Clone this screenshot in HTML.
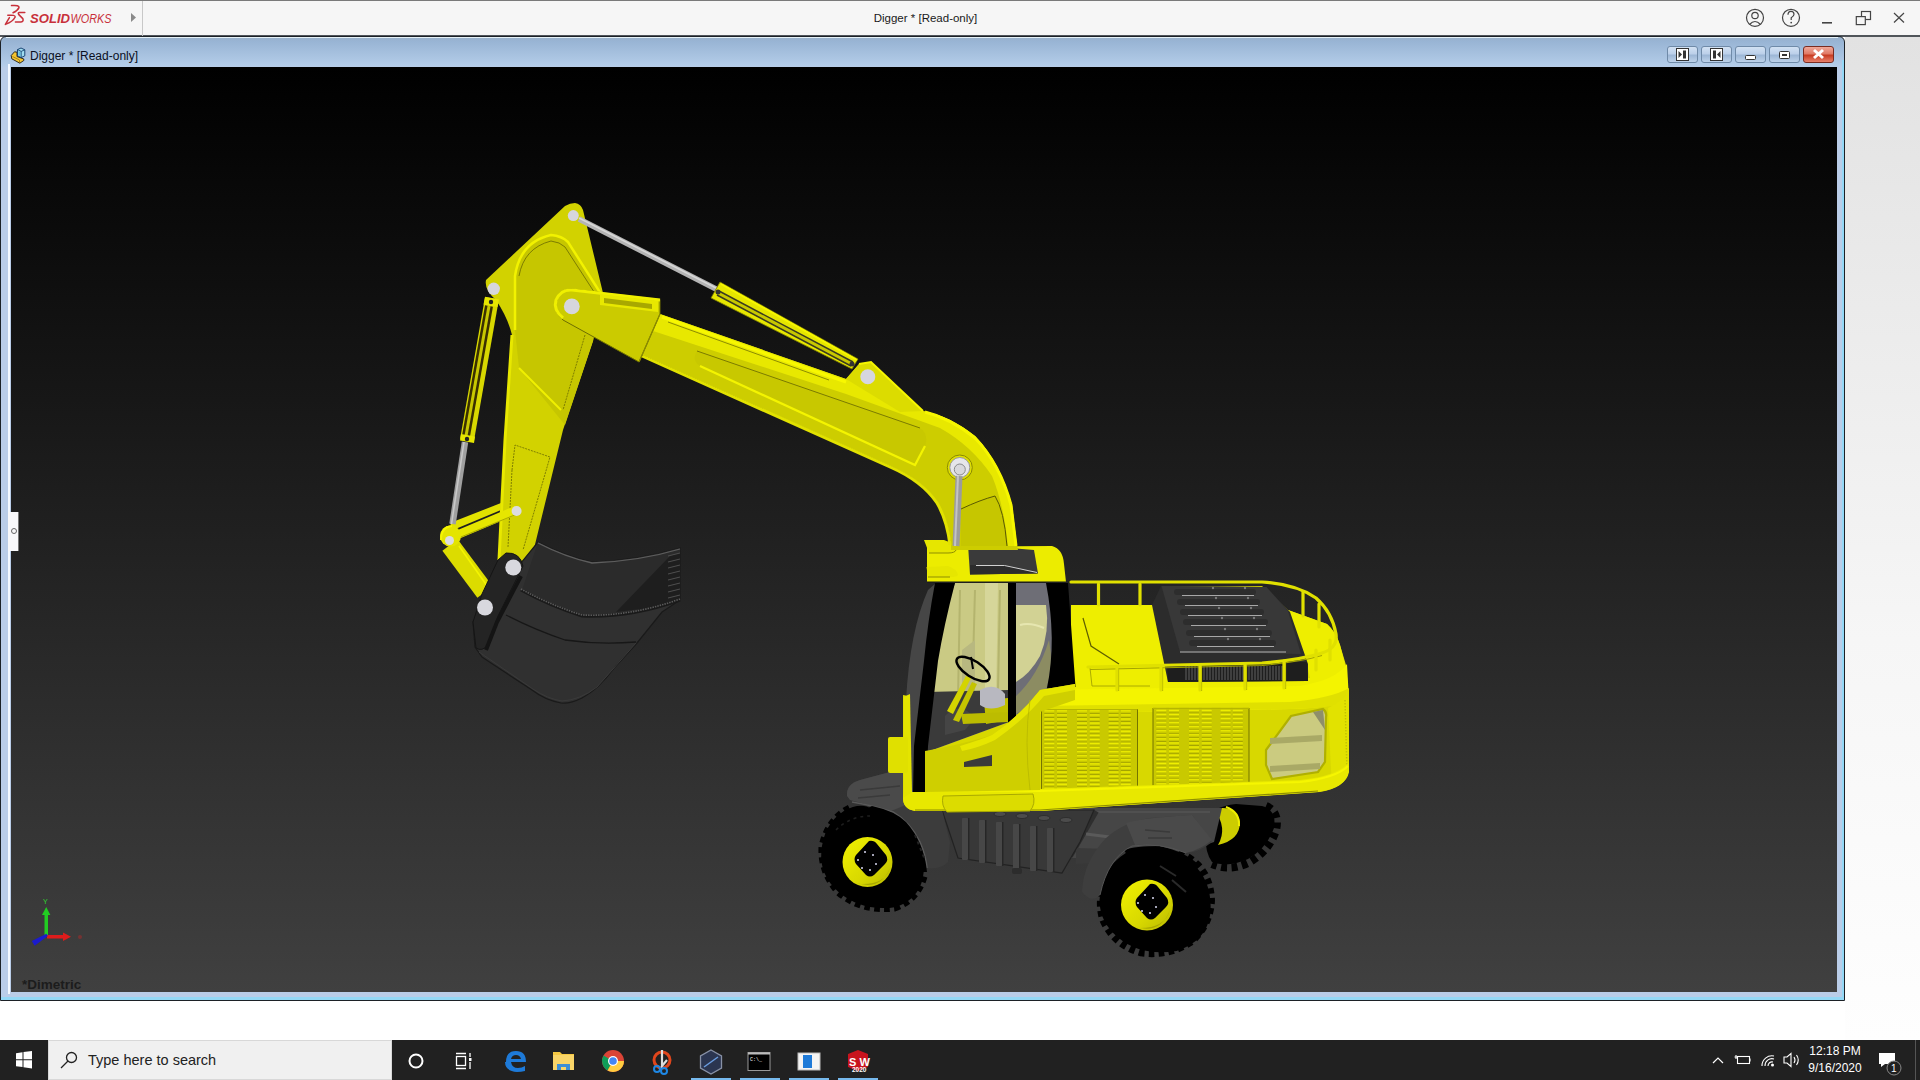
<!DOCTYPE html>
<html><head><meta charset="utf-8">
<style>
*{margin:0;padding:0;box-sizing:border-box}
html,body{width:1920px;height:1080px;overflow:hidden;background:#fff;font-family:"Liberation Sans",sans-serif}
.abs{position:absolute}
#topbar{left:0;top:0;width:1920px;height:37px;background:#f6f6f6;border-top:1px solid #7a7a7a}
#topline{left:0;top:35px;width:1920px;height:2px;background:#50555a}
#sep{left:142px;top:1px;width:1px;height:35px;background:#c8c8c8}
#title{left:0;top:12px;width:1851px;text-align:center;font-size:11.5px;color:#1a1a1a}
#rightstrip{left:1845px;top:37px;width:75px;height:1003px;background:linear-gradient(#e2e2e2,#f6f6f6 60%,#fefefe)}
#frame{left:0;top:36px;width:1845px;height:965px;border:1px solid #1c2126;border-radius:6px 6px 0 0;background:linear-gradient(#9ab2cc 1px,#98b4d4 4px,#b3cce8 28px,#bacde8 31px,#bacde8)}
#fr-in{left:1px;top:1px;width:1843px;height:963px;border:1px solid #e9f3fb;border-top:none;border-radius:5px 5px 0 0}
#fr-cy{left:1px;top:997px;width:1843px;height:3px;background:#94d8f6}
#fr-cyr{left:1842px;top:60px;width:2px;height:940px;background:#94d8f6}
#vpborder{left:8px;top:64px;width:1831px;height:930px;border-left:2px solid #f4f9ff;}
#vp{left:11px;top:67px;width:1826px;height:925px;background:linear-gradient(#000,#404040)}
#ftitle{left:30px;top:49px;font-size:12px;color:#0a0f1e}
.btn{top:46px;width:31px;height:17px;border:1px solid #6f8aa8;border-radius:3px;background:linear-gradient(#d2e1f3,#bcd0ea 45%,#9db7d6 55%,#bdd2ea)}
.btn.x{background:linear-gradient(#f0a89a,#e07a66 45%,#c83c22 55%,#e8816c);border-color:#7a2c22}
#taskbar{left:0;top:1040px;width:1920px;height:40px;background:#212121}
#search{left:48px;top:1040px;width:344px;height:40px;background:#f0f0f0;border:1px solid #d8d8d8}
#stext{left:88px;top:1052px;font-size:14.5px;color:#222}
#tray{font-size:12px;color:#fff;text-align:center}
</style></head><body>
<div id="topbar" class="abs"></div>
<div id="topline" class="abs"></div>
<div id="sep" class="abs"></div>
<div id="title" class="abs">Digger * [Read-only]</div>
<!-- SW logo -->
<svg class="abs" style="left:0;top:0" width="142" height="36" viewBox="0 0 142 36">
 <g fill="none" stroke="#c8303a" stroke-width="1.5" stroke-linecap="round" stroke-linejoin="round">
  <path d="M11.5 5.6 Q19.5 4.8 19 7.6 Q17.5 10.8 13 12.8"/>
  <path d="M7.8 15.3 Q15.5 14.6 15.2 17 Q13 21.5 5.4 24.4 L9.4 17.6"/>
  <path d="M24.8 12.4 L19.2 12.4 Q17.6 12.8 18.8 14.6 L22.8 18.6 Q24 21.6 21 22 L15.4 22"/>
 </g>
 <text x="30" y="22.5" textLength="40" lengthAdjust="spacingAndGlyphs" font-family="Liberation Sans" font-weight="bold" font-style="italic" font-size="12" fill="#c8303a">SOLID</text>
 <text x="70.5" y="22.5" textLength="41" lengthAdjust="spacingAndGlyphs" font-family="Liberation Sans" font-style="italic" font-size="12" fill="#c8303a">WORKS</text>
 <path d="M131 13 L136 17.5 L131 22 Z" fill="#8a8a8a"/>
</svg>
<!-- top right icons -->
<svg class="abs" style="left:1740px;top:0" width="180" height="36" viewBox="0 0 180 36">
 <g fill="none" stroke="#444" stroke-width="1.2">
  <circle cx="15" cy="17.8" r="8.5"/>
  <circle cx="15" cy="15.5" r="3.2"/>
  <path d="M9.5 24.5 Q15 18.5 20.5 24.5"/>
  <circle cx="51" cy="17.8" r="8.5"/>
  <path d="M48 14.8 Q48 11.3 51 11.3 Q54 11.3 54 14.3 Q54 16.3 51.2 17.8 L51.2 20"/>
 </g>
 <circle cx="51.2" cy="22.6" r="0.9" fill="#444"/>
 <rect x="82" y="22" width="10" height="1.6" fill="#444"/>
 <g fill="none" stroke="#444" stroke-width="1.2">
  <rect x="121.5" y="11.5" width="9" height="8"/>
  <rect x="116.3" y="16.6" width="9" height="8" fill="#f6f6f6"/>
  <path d="M154 13 L164 22.5 M164 13 L154 22.5"/>
 </g>
</svg>
<div id="rightstrip" class="abs"></div>
<div id="frame" class="abs"></div>
<div id="fr-cy" class="abs"></div>
<div class="abs" style="left:6px;top:37px;width:1832px;height:1px;background:#e6f2f8"></div>
<div id="fr-cyr" class="abs"></div>
<div id="vpborder" class="abs"></div>
<div id="vp" class="abs"></div>
<!-- frame title -->
<svg class="abs" style="left:10px;top:46px" width="18" height="18" viewBox="0 0 18 18">
 <path d="M1.2 9.5 L4.5 5.8 L7 6.2 L7 10.5 L13.8 13 L13.8 14.5 L9.8 17.2 L1.8 12.8 Z" fill="#f4c430" stroke="#1a1a1a" stroke-width="0.9" stroke-linejoin="round"/>
 <path d="M2.5 10.5 L9.5 14 L9.5 17" fill="none" stroke="#8a6a10" stroke-width="0.7"/>
 <path d="M7.5 3.6 L11 2 L14.8 3.8 L14.8 9.8 L11.2 11.6 L7.5 9.8 Z" fill="#9fdcf0" stroke="#0d3768" stroke-width="0.9" stroke-linejoin="round"/>
 <path d="M7.5 3.6 L11.2 5.4 L14.8 3.8 M11.2 5.4 L11.2 11.6" fill="none" stroke="#0d3768" stroke-width="0.8"/>
 <path d="M8.4 5 L10.6 6 L10.6 10 L8.4 9 Z" fill="#3aa6c8" opacity="0.6"/>
</svg>
<div id="ftitle" class="abs">Digger * [Read-only]</div>
<div class="abs btn" style="left:1667px"></div>
<div class="abs btn" style="left:1701px"></div>
<div class="abs btn" style="left:1735px"></div>
<div class="abs btn" style="left:1769px"></div>
<div class="abs btn x" style="left:1803px"></div>
<svg class="abs" style="left:1660px;top:40px" width="180" height="28" viewBox="0 0 180 28">
 <g fill="#fff" stroke="#333" stroke-width="1">
  <rect x="16.5" y="8.5" width="12" height="12"/>
  <rect x="50.5" y="8.5" width="12" height="12"/>
  <rect x="85.5" y="15.5" width="10" height="4" rx="1"/>
  <rect x="119.5" y="11.5" width="10" height="7" rx="1"/>
 </g>
 <g fill="#333">
  <rect x="23" y="10.5" width="3" height="8"/><path d="M18.5 11 L22 14.5 L18.5 18 Z"/>
  <rect x="53" y="10.5" width="3" height="8"/><path d="M60.5 11 L57 14.5 L60.5 18 Z"/>
  <rect x="122" y="14" width="5" height="2"/>
 </g>
 <path d="M154 10 L163 18 M163 10 L154 18" stroke="#fff" stroke-width="3"/>
</svg>
<!-- side tab -->
<div class="abs" style="left:8px;top:512px;width:11px;height:39px;background:#f8f8fa;border-right:1px solid #777"></div>
<div class="abs" style="left:11px;top:528px;width:6px;height:6px;border:1px solid #666;border-radius:50%"></div>

<!-- EXCAVATOR -->
<svg id="exc" class="abs" style="left:0;top:0" width="1920" height="1080" viewBox="0 0 1920 1080">
<defs>
 <pattern id="louv" x="0" y="0" width="14" height="4.6" patternUnits="userSpaceOnUse">
  <rect width="14" height="4.6" fill="#cfcf00"/>
  <rect x="1" y="0.6" width="10" height="1.6" fill="#f4f400"/>
  <rect x="1" y="2.2" width="10" height="0.9" fill="#8a8a00"/>
 </pattern>
 <pattern id="tread" x="0" y="0" width="6" height="6" patternUnits="userSpaceOnUse">
  <rect width="6" height="6" fill="#000"/>
 </pattern>
 <linearGradient id="gRim" x1="0" y1="0" x2="1" y2="1">
  <stop offset="0" stop-color="#f2f200"/><stop offset="0.6" stop-color="#d8d800"/><stop offset="1" stop-color="#b8b800"/>
 </linearGradient>
 <linearGradient id="gGlassL" x1="0" y1="0" x2="0" y2="1">
  <stop offset="0" stop-color="#c9c98a"/><stop offset="1" stop-color="#d8d898"/>
 </linearGradient>
</defs>

<!-- ===== far rear wheel ===== -->
<path d="M1206 822 Q1212 806 1236 804 L1262 806 Q1277 810 1274 828 Q1267 848 1248 859 Q1228 868 1212 862 Q1203 850 1206 822 Z" fill="#000"/>
<path d="M1266 806 Q1280 812 1276 830 Q1270 850 1250 862 Q1230 872 1212 864" fill="none" stroke="#000" stroke-width="8" stroke-dasharray="6 4.5"/>
<path d="M1214 809 Q1236 804 1240 822 Q1240 840 1218 845 Q1228 828 1214 809 Z" fill="#cccc00"/>
<path d="M1226 807 Q1240 812 1239 826" stroke="#eeee00" stroke-width="2" fill="none"/>

<!-- ===== undercarriage ===== -->
<path d="M1070 808 L1222 808 L1214 842 L1190 850 L1100 858 L1070 858 Z" fill="#464646"/>
<path d="M1080 812 L1210 812" stroke="#555" stroke-width="1.5"/>
<path d="M1096 811 L1070 856" stroke="#2e2e2e" stroke-width="6"/>
<path d="M1086 834 L1118 838" stroke="#5a5a5a" stroke-width="3"/>
<path d="M1076 848 L1140 850 L1136 862 L1076 864 Z" fill="#3a3a3a"/>
<!-- front box -->
<path d="M942 810 L1094 810 L1080 842 L1062 873 L958 858 Z" fill="#383838" stroke="#222" stroke-width="1.2"/>
<g fill="#474747">
 <rect x="962" y="818" width="6" height="42" rx="1"/><rect x="979" y="820" width="6" height="43" rx="1"/><rect x="996" y="822" width="6" height="44" rx="1"/>
 <rect x="1013" y="824" width="6" height="45" rx="1"/><rect x="1030" y="826" width="6" height="45" rx="1"/><rect x="1047" y="828" width="6" height="44" rx="1"/>
</g>
<g fill="#262626">
 <rect x="968" y="818" width="1.5" height="42"/><rect x="985" y="820" width="1.5" height="43"/><rect x="1002" y="822" width="1.5" height="44"/>
 <rect x="1019" y="824" width="1.5" height="45"/><rect x="1036" y="826" width="1.5" height="45"/><rect x="1053" y="828" width="1.5" height="44"/>
</g>
<g fill="#4c4c4c" stroke="#2a2a2a" stroke-width="0.8"><ellipse cx="1000" cy="814" rx="6" ry="2.5"/><ellipse cx="1022" cy="816" rx="6" ry="2.5"/><ellipse cx="1044" cy="818" rx="6" ry="2.5"/><ellipse cx="1066" cy="820" rx="6" ry="2.5"/></g>
<rect x="1012" y="868" width="10" height="6" rx="2" fill="#2c2c2c"/>

<!-- ===== front fender ===== -->
<path d="M847 796 Q846 784 860 780 L890 772 L912 772 L942 810 L950 842 L948 862 Q940 870 927 868 Q924 842 906 822 Q895 811 870 806 Z" fill="#3c3c3c"/>
<path d="M847 796 Q846 784 860 780 L890 772 L912 772 L918 800 L891 811 Q872 806 850 800 Z" fill="#4a4a4a"/>
<path d="M852 802 Q875 806 893 812 Q910 822 920 842 Q926 856 927 868" stroke="#5a5a5a" stroke-width="1.5" fill="none"/>
<path d="M860 790 L900 786 M858 798 L890 795" stroke="#3a3a3a" stroke-width="1.5"/>
<!-- front tire -->
<path d="M818 852 Q820 822 842 808 Q860 798 872 806 Q895 811 906 822 Q924 842 927 872 Q925 900 898 910 Q862 916 836 894 Q816 876 818 852 Z" transform="translate(873 858) scale(0.94) translate(-873 -858)" fill="#000"/>
<path d="M872 806 Q895 811 906 822 Q924 842 927 872 L915 872 Q910 845 895 828 Q880 815 860 812 Z" fill="#000"/>
<path d="M848 805 Q826 816 819 845 Q817 872 836 894 Q860 915 896 911 Q922 902 928 874" transform="translate(873 858) scale(0.93) translate(-873 -858)" fill="none" stroke="#000" stroke-width="9" stroke-dasharray="6 4.5"/>
<path d="M836 830 Q850 816 870 816" stroke="#1e1e1e" stroke-width="1.5" fill="none" stroke-dasharray="3 4"/>
<path d="M915 835 L925 860" stroke="#222" stroke-width="2" stroke-dasharray="3 4"/>
<ellipse cx="867.5" cy="862" rx="25" ry="25" fill="url(#gRim)"/>
<path d="M854 882 Q880 892 890 868 Q885 885 860 884 Z" fill="#a8a800"/>
<path d="M869 841 Q874 840 877 844 L886 855 Q889 860 885 864 L874 875 Q870 878 866 875 L856 864 Q853 859 856 855 Z" fill="#000"/>
<g fill="#d8d8f0"><circle cx="865" cy="852" r="1"/><circle cx="873" cy="855" r="1"/><circle cx="876" cy="864" r="1"/><circle cx="870" cy="870" r="1"/><circle cx="862" cy="868" r="1"/><circle cx="858" cy="860" r="1"/></g>

<!-- rear tire -->
<path d="M1096 900 Q1098 866 1124 850 Q1135 846 1160 846 Q1186 852 1200 866 Q1216 884 1214 914 Q1210 944 1178 954 Q1140 960 1116 940 Q1096 924 1096 900 Z" transform="translate(1155 902) scale(0.94) translate(-1155 -902)" fill="#000"/>
<path d="M1124 850 Q1135 846 1160 846 Q1186 852 1200 866 L1190 872 Q1160 856 1130 860 Z" fill="#000"/>
<path d="M1100 880 Q1094 905 1100 922 Q1112 948 1140 956 Q1170 960 1194 944 Q1214 926 1215 900 Q1214 876 1200 862 Q1190 852 1176 848" transform="translate(1155 902) scale(0.93) translate(-1155 -902)" fill="none" stroke="#000" stroke-width="9" stroke-dasharray="6 4.5"/>
<path d="M1160 866 L1176 876 M1172 880 L1186 892" stroke="#2a2a2a" stroke-width="2"/>
<ellipse cx="1147" cy="905" rx="26" ry="25.5" fill="url(#gRim)"/>
<path d="M1133 926 Q1160 936 1170 910 Q1165 928 1140 928 Z" fill="#a8a800"/>
<path d="M1150 884 Q1155 883 1158 887 L1167 898 Q1170 903 1166 907 L1155 918 Q1151 921 1147 918 L1137 907 Q1134 902 1137 898 Z" fill="#000"/>
<g fill="#dcdcf4"><circle cx="1145" cy="895" r="1"/><circle cx="1153" cy="898" r="1"/><circle cx="1156" cy="907" r="1"/><circle cx="1150" cy="913" r="1"/><circle cx="1142" cy="911" r="1"/><circle cx="1138" cy="903" r="1"/></g>
<!-- ===== rear fender ===== -->
<path d="M1082 892 Q1083 862 1106 838 Q1124 822 1150 818 L1192 815 L1212 842 Q1200 852 1186 853 Q1160 842 1132 846 Q1108 858 1100 895 Q1092 904 1082 892 Z" fill="#3e3e3e"/>
<path d="M1126 823 Q1140 818 1192 815 L1212 840 Q1200 850 1186 853 Q1160 843 1135 845 Z" fill="#4a4a4a"/>
<path d="M1145 830 L1170 832 M1148 838 L1172 838" stroke="#3a3a3a" stroke-width="1.5"/>
<path d="M1100 895 Q1108 858 1132 846 Q1160 842 1186 853" stroke="#555" stroke-width="1" fill="none"/>
<!-- ===== body ===== -->
<defs>
 <pattern id="louv2" x="1041" y="713" width="240" height="4.08" patternUnits="userSpaceOnUse">
  <rect width="240" height="4.08" fill="#c9c900"/>
  <g fill="#8e8e00"><rect x="3.3" y="0.3" width="10" height="0.8"/><rect x="16" y="0.3" width="10" height="0.8"/><rect x="36" y="0.3" width="10" height="0.8"/><rect x="48.7" y="0.3" width="10" height="0.8"/><rect x="67.6" y="0.3" width="10" height="0.8"/><rect x="79.8" y="0.3" width="10" height="0.8"/>
  <rect x="115.3" y="0.3" width="10" height="0.8"/><rect x="128" y="0.3" width="10" height="0.8"/><rect x="148" y="0.3" width="10" height="0.8"/><rect x="160.7" y="0.3" width="10" height="0.8"/><rect x="179.6" y="0.3" width="10" height="0.8"/><rect x="191.8" y="0.3" width="10" height="0.8"/></g>
  <g fill="#f0f000"><rect x="3.3" y="1.1" width="10" height="1.5"/><rect x="16" y="1.1" width="10" height="1.5"/><rect x="36" y="1.1" width="10" height="1.5"/><rect x="48.7" y="1.1" width="10" height="1.5"/><rect x="67.6" y="1.1" width="10" height="1.5"/><rect x="79.8" y="1.1" width="10" height="1.5"/>
  <rect x="115.3" y="1.1" width="10" height="1.5"/><rect x="128" y="1.1" width="10" height="1.5"/><rect x="148" y="1.1" width="10" height="1.5"/><rect x="160.7" y="1.1" width="10" height="1.5"/><rect x="179.6" y="1.1" width="10" height="1.5"/><rect x="191.8" y="1.1" width="10" height="1.5"/></g>
 </pattern>
</defs>
<!-- silhouette / side color -->
<path d="M1071 605 L1153 605 L1163 586 L1262 586 L1288 610 L1327 624 Q1336 632 1340 645 L1346 665 L1349 700 L1349 770 Q1346 788 1320 792 L1040 811 L915 811 Q903 809 903 798 L903 695 L930 700 L1040 690 L1071 690 Z" fill="#d8d800"/>
<!-- deck top surface -->
<path d="M1071 605 L1153 605 L1168 682 L1310 678 L1306 660 L1288 610 L1327 624 Q1336 632 1340 645 L1346 668 Q1335 684 1300 688 L1071 692 Z" fill="#eeee00"/>
<!-- rounded top edge band -->
<path d="M1040 690 L1300 686 Q1336 680 1347 664 L1349 700 Q1332 708 1290 709 L1040 714 Z" fill="#f4f400"/>
<path d="M1040 706 L1290 702 Q1332 698 1349 688 L1349 702 Q1332 708 1290 709 L1040 714 Z" fill="#e0e000"/>
<!-- right end highlight -->
<path d="M1328 708 Q1345 700 1349 690 L1349 770 Q1346 784 1332 788 Z" fill="#e2e200"/>
<path d="M1345 700 L1347 770" stroke="#c4c400" stroke-width="1.5" stroke-dasharray="1.5 1.5"/>
<!-- louver panels -->
<rect x="1041" y="709" width="96.5" height="79.5" fill="url(#louv2)"/>
<rect x="1153" y="708" width="96" height="79.5" fill="url(#louv2)" transform="translate(0 -0.5)"/>
<path d="M1041.5 709 V789 M1137.5 709 V789 M1153 708 V788 M1249 708 V788" stroke="#6a6a00" stroke-width="0.9"/>
<path d="M1041 709.5 H1137.5 M1153 708.5 H1249" stroke="#b6b600" stroke-width="1"/>
<!-- right window -->
<path d="M1266 750 L1291 716 L1323 709 Q1327 712 1326 717 L1325 762 L1318 772 L1272 779 L1266 765 Z" fill="#cbcb80" stroke="#b0b000" stroke-width="2.2"/>
<path d="M1270 738 L1322 735 L1322 741 L1270 744 Z" fill="#a9a966"/>
<path d="M1270 766 L1320 763 L1320 769 L1270 772 Z" fill="#a9a966"/>
<path d="M1313 712 L1323 710 L1325 730 Z" fill="#8e8e6a"/>
<!-- bottom rail -->
<path d="M905 788 L1040 789 L1300 780 Q1338 776 1349 762 L1349 772 Q1346 788 1318 792 L1040 811 L915 811 Q903 809 903 798 Z" fill="#e8e800"/>
<path d="M910 790 L1040 791 L1300 782 Q1336 778 1348 766" stroke="#f6f600" stroke-width="2" fill="none"/>
<path d="M915 810 L1040 810 L1318 791" stroke="#8e8e00" stroke-width="1.2" fill="none"/>
<!-- step -->
<path d="M943 796 L1033 794 Q1036 804 1030 811 L947 812 Q941 806 943 796 Z" fill="#dcdc00" stroke="#a8a800" stroke-width="1"/>

<!-- ===== deck / engine / rails ===== -->
<path d="M1083 618 L1091 646 L1119 664" stroke="#5e5e00" stroke-width="1.2" fill="none"/>
<path d="M1090 668 L1092 686 L1150 686" stroke="#9a9a00" stroke-width="0.8" fill="none"/>
<!-- engine cover -->
<path d="M1152 605 L1161 586 L1266 587 L1290 612 L1308 664 L1308 681 L1168 682 Z" fill="#2c2c2c"/>
<path d="M1161.5 586 L1266.5 587 L1288 611 L1301 654 L1180 652 Z" fill="#383838"/>
<path d="M1180 652 L1286 652" stroke="#8a8a8a" stroke-width="1.4"/>
<path d="M1167 664 L1307 662 L1308 681 L1168 682 Z" fill="#1e1e1e"/>
<g stroke="#6a6a6a" stroke-width="0.9"><path d="M1186 666 V680 M1189 666 V680 M1192 666 V680 M1195 666 V680 M1198 666 V680 M1201 666 V680 M1204 666 V680 M1207 666 V680 M1210 666 V680 M1213 666 V680 M1216 666 V680 M1219 666 V680 M1222 666 V680 M1225 666 V680 M1228 666 V680 M1231 666 V680 M1234 666 V680 M1237 666 V680 M1240 666 V680 M1243 666 V680 M1246 666 V680 M1249 666 V680 M1252 666 V680 M1255 666 V680 M1258 666 V680 M1261 666 V680 M1264 666 V680 M1267 666 V680 M1270 666 V680 M1273 666 V680 M1276 666 V680 M1279 666 V680 M1282 666 V680"/></g>
<g fill="#2d2d2d">
 <rect x="1174" y="589" width="82" height="6" rx="3"/><rect x="1177" y="599" width="83" height="6" rx="3"/><rect x="1180" y="609" width="84" height="6" rx="3"/>
 <rect x="1183" y="619" width="85" height="6" rx="3"/><rect x="1186" y="630" width="86" height="6" rx="3"/><rect x="1189" y="640" width="87" height="6" rx="3"/>
</g>
<g stroke="#a8a8a8" stroke-width="1.2">
 <path d="M1182 595.5 L1254 595.5 M1185 605.5 L1258 605.5 M1188 615.5 L1262 615.5 M1191 625.5 L1266 625.5 M1194 636.5 L1270 636.5 M1197 646.5 L1274 646.5"/>
</g>
<g fill="#7a7a7a"><circle cx="1213" cy="588" r="1.2"/><circle cx="1245" cy="588" r="1.2"/><circle cx="1216" cy="598" r="1.2"/><circle cx="1248" cy="598" r="1.2"/><circle cx="1219" cy="608" r="1.2"/><circle cx="1251" cy="608" r="1.2"/><circle cx="1222" cy="618" r="1.2"/><circle cx="1254" cy="618" r="1.2"/><circle cx="1225" cy="629" r="1.2"/><circle cx="1257" cy="629" r="1.2"/><circle cx="1228" cy="639" r="1.2"/><circle cx="1260" cy="639" r="1.2"/></g>
<!-- rails -->
<g stroke="#a4a400" stroke-width="1.2" fill="none">
 <path d="M1090 669.5 L1262 665.5 Q1300 662 1322 655.5"/>
 <path d="M1118.5 668 V691 M1162.5 667 V691 M1201.5 666 V691 M1246.5 665 V690 M1285.5 662 V689"/>
</g>
<g stroke="#e0e000" stroke-width="3.2" fill="none" stroke-linecap="round">
 <path d="M1071 582 L1262 582 Q1296 584 1316 598 Q1332 612 1336 634 Q1338 648 1322 653 Q1300 660 1262 663 L1088 667"/>
 <path d="M1098.5 584 V605 M1140 584 V605 M1303 592 L1303 616 M1319 604 V627"/>
 <path d="M1117 667 V690 M1161 666 V690 M1200 665 V690 M1245 664 V689 M1284 661 V688 M1316 650 V670 M1330 640 V660"/>
</g>
<!-- ===== cab ===== -->
<!-- cab front grey face (windshield edge) -->
<path d="M906 700 Q910 630 928 590 L936 583 L955 583 L927 792 L906 792 Z" fill="#464646"/>
<!-- glass left pane -->
<path d="M955 583 L1009 583 L1009 722 L968 737 L927 752 L930 690 Q940 620 955 583 Z" fill="#caca84"/>
<path d="M960 590 L958 700 M975 590 L972 700 M1000 590 L998 690" stroke="#b4b46e" stroke-width="2" fill="none"/>
<path d="M985 583 L998 583 L996 700 L985 700 Z" fill="#d6d69a"/>
<path d="M962 650 L975 640 L975 700 L962 700 Z" fill="#b8b880"/>
<!-- glass right pane -->
<path d="M1016 583 L1047 583 Q1057 640 1048 687 L1040 700 L1016 715 Z" fill="#6e6e76"/>
<path d="M1016 605 L1046 605 Q1050 632 1040 656 Q1030 674 1016 682 Z" fill="#d2d294"/>
<path d="M1020 625 Q1030 622 1044 628" stroke="#e6e6b0" stroke-width="2" fill="none"/>
<path d="M1049 640 Q1054 665 1046 690 L1032 704 L1016 714 L1016 696 Q1038 676 1049 640 Z" fill="#8c8c62"/>
<!-- interior bits -->
<path d="M927 692 L1009 690 L1009 722 L968 737 L927 752 Z" fill="#3a3a3a"/>
<path d="M945 716 Q960 700 975 718 L965 730 L945 735 Z" fill="#454545"/>
<path d="M984 700 L1008 698 L1008 720 L986 724 Z" fill="#c0c000"/>
<path d="M961 714 L1008 712 L1008 722 L963 724 Z" fill="#bcbc00"/>
<path d="M947 711 L966 676 L971 678 L953 714 Z" fill="#d4d400"/>
<path d="M953 720 L972 682 L977 684 L959 722 Z" fill="#c4c400"/>
<path d="M980 690 Q995 682 1005 694 L1005 705 Q990 712 980 705 Z" fill="#b8b8c0"/>
<ellipse cx="973" cy="669" rx="19" ry="8" transform="rotate(33 973 669)" fill="none" stroke="#000" stroke-width="2.5"/>
<path d="M973 669 L971 657" stroke="#000" stroke-width="2"/>
<!-- pillars -->
<path d="M935 583 L955 583 Q944 625 938 661 L928 746 L926 792 L913 792 L914 746 L924 661 Q928 620 935 583 Z" fill="#000"/>
<rect x="1008" y="583" width="8" height="140" fill="#000"/>
<path d="M1046 583 L1068 583 L1075.5 687 L1047 688 Q1057 640 1046 583 Z" fill="#000"/>
<!-- left yellow frame & mirror -->
<path d="M903.5 697 L910 694 L912 792 L903.5 798 Z" fill="#e4e400"/>
<rect x="888" y="737" width="20" height="36" rx="2" fill="#e0e000"/>
<!-- lower door -->
<path d="M925 751 Q960 745 992 735 Q1020 716 1040 690 L1075 684 L1075 700 L1040 712 L1040 790 L925 792 Z" fill="#cfcf00"/>
<path d="M960 746 Q980 740 992 735 Q1020 716 1040 690 L1075 684 L1075 690 L1044 696 Q1024 720 995 740 Q978 748 962 751 Z" fill="#e6e600"/>
<path d="M1030 700 Q1024 740 1030 790" stroke="#b8b800" stroke-width="0.8" fill="none"/>
<path d="M964 762 L992 755 L992 766 L964 767 Z" fill="#3a3a3a"/>
<!-- roof -->
<path d="M927 547 L1052 546 Q1063 549 1064 564 L1066 582 L927 582 Z" fill="#ecec00"/>
<path d="M968 544.5 L1034 550 L1038 573.5 L970 574.5 Z" fill="#3a3a3a"/>
<path d="M970 565 L1004 565 L1038 573.5 L970 574.5 Z" fill="#2c2c2c"/>
<path d="M976 565.5 L1004.5 565.5 L1037 572.5" stroke="#d0d0d0" stroke-width="1" fill="none"/>
<!-- roof brackets -->
<path d="M924 540 L944 540 Q954 543 956 550 Q955 553 948 553 L929 553 Z" fill="#e6e600"/>
<path d="M926.5 567 L948 566 Q957 569 958 575 Q957 577 950 577 L928 577 Z" fill="#e6e600"/>
<path d="M929 553 L948 553 Q955 553 956 550" stroke="#8e8e00" stroke-width="1" fill="none"/>
<path d="M928 577 L950 577" stroke="#8e8e00" stroke-width="1"/>
<path d="M927 582 L1066 582" stroke="#1a1a1a" stroke-width="1.2"/>
<!-- ===== boom ===== -->
<path d="M660 314 L846 379 L859 364 L871 362 L923 411 Q950 416 975 436 Q1000 462 1012 505 L1017 546 L1018 550 L951 550 L951 545 Q948 520 937 502 Q922 480 890 466 L640 354 Z" fill="#cdcd00"/>
<!-- top bright band -->
<path d="M660 314 L846 379 L900 400 L923 411 Q950 416 975 436 Q1000 462 1012 505 L1017 546 L1008 546 Q1004 505 992 476 Q972 446 940 428 L846 394 L650 330 Z" fill="#e8e800"/>
<path d="M662 317 L846 382" stroke="#f8f800" stroke-width="3"/>
<path d="M925 412 Q950 418 975 438 Q1000 464 1011 505 L1016 546" stroke="#f6f600" stroke-width="3" fill="none"/>
<path d="M668 322 L829 380" stroke="#8c8c00" stroke-width="1"/>
<!-- recessed panel -->
<path d="M697 351 L920 428 Q929 434 925 446 L915 465 L700 366 Q691 360 697 351 Z" fill="#c8c800"/>
<path d="M700 366 L915 465 L925 446" stroke="#f4f400" stroke-width="2.2" fill="none"/>
<path d="M697 351 L920 428" stroke="#7a7a00" stroke-width="1" fill="none"/>
<!-- lower bright edge -->
<path d="M642 356 L890 467 Q922 481 937 503 Q947 520 950 545" stroke="#e2e200" stroke-width="3" fill="none"/>
<!-- curved lower inner panel -->
<path d="M961 509 Q980 500 995 496 Q1004 510 1007 546 L961 546 Z" fill="#c6c600"/>
<path d="M961 509 Q980 500 995 496 Q1004 510 1007 546" stroke="#5a5a00" stroke-width="1" fill="none"/>
<!-- bracket on boom -->
<path d="M846 379 L859 364 L871 362 L923 411 L900 412 Z" fill="#dcdc00"/>
<path d="M859 364 L871 362 L923 411" stroke="#f6f600" stroke-width="2" fill="none"/>
<circle cx="867.8" cy="376.7" r="7.5" fill="#d6d6de"/>
<!-- boom pin + rod -->
<circle cx="959.8" cy="467.5" r="12.5" fill="#e0e000" stroke="#8a8a00" stroke-width="1"/>
<circle cx="959.8" cy="467.5" r="10" fill="#e6e6ea" stroke="#999" stroke-width="1"/>
<circle cx="959.8" cy="469.5" r="5.5" fill="#d8d8dc" stroke="#8a8a8a" stroke-width="1"/>
<line x1="959" y1="476" x2="956" y2="546" stroke="#9c9c9c" stroke-width="7"/>
<line x1="958" y1="476" x2="955" y2="546" stroke="#c4c4c4" stroke-width="2"/>
<!-- ===== arm (stick) ===== -->
<path d="M575 203 Q581 204 583 210 L603 293 L593 341 L563 430 L530 565 L505 582 L499 560 L505 440 L512 335 Q508 318 496 300 Q484 290 486 280 L565 206 Q570 203 575 203 Z" fill="#d2d200"/>
<!-- arm inner plate -->
<path d="M515 276 Q520 242 551 235 Q562 236 568 242 L601 294 L593 341 L565 425 L519 368 L515 330 Z" fill="#c6c600"/>
<path d="M515 330 L515 276 Q520 242 551 235 Q562 236 568 242 L601 294" stroke="#f2f200" stroke-width="2.5" fill="none"/>
<path d="M519 368 L561 410" stroke="#f0f000" stroke-width="2" fill="none"/>
<path d="M512 335 L505 440 L499 560" stroke="#e8e800" stroke-width="3" fill="none"/>
<path d="M512 470 L515 445 L550 457 L523 550 M512 470 L508 547" stroke="#6a6a00" stroke-width="0.8" fill="none" stroke-dasharray="2 1"/>
<path d="M585 335 L563 410" stroke="#6a6a00" stroke-width="0.8" fill="none" stroke-dasharray="2 1"/>
<path d="M519 276 Q524 248 551 241 Q560 242 565 247 L598 298" stroke="#6a6a00" stroke-width="0.8" fill="none"/>
<!-- knuckle -->
<path d="M571 289 L660 299.5 L660 314 L639 362 L563 320 Q554 313 556 302 Q560 289 571 289 Z" fill="#cbcb00" stroke="#6e6e00" stroke-width="1"/>
<path d="M563 318 Q553 310 556 300 Q561 289 572 290 L660 300" stroke="#f0f000" stroke-width="3" fill="none"/>
<path d="M600 294 L658 301 L658 312 L600 305 Z" fill="#e8e800"/>
<path d="M604 298 L652 304 L652 309 L604 303 Z" fill="#a8a800"/>
<path d="M660 314 L639 362" stroke="#8a8a00" stroke-width="1.2"/>
<circle cx="571.8" cy="306.4" r="7.9" fill="#d6d6dc"/>
<circle cx="573.3" cy="215.6" r="5.5" fill="#d6d6dc"/>
<circle cx="493.7" cy="288.8" r="6.2" fill="#d6d6dc"/>

<!-- boom rod + cylinder -->
<line x1="579" y1="219" x2="718" y2="290" stroke="#b4b4b4" stroke-width="5.5"/>
<line x1="579" y1="218" x2="718" y2="289" stroke="#d8d8d8" stroke-width="1.5"/>
<path d="M720 282 L858 359 L852 369 L711 298 Z" fill="#e6e600" stroke="#7a7a00" stroke-width="0.8"/>
<path d="M721 284 L857 360" stroke="#f6f600" stroke-width="2"/>
<line x1="718" y1="293" x2="852" y2="364" stroke="#3a3a20" stroke-width="6"/>
<line x1="718" y1="293" x2="852" y2="364" stroke="#c8c800" stroke-width="3"/>
<circle cx="718" cy="292" r="2.5" fill="#333"/>
<circle cx="852" cy="364" r="2.5" fill="#333"/>
<!-- ===== bucket ===== -->
<!-- outer body -->
<path d="M538 542 Q565 556 592 562 Q640 560 680 548 L680 600 L662 612 L637 643 L615 667 Q598 690 582 698 Q570 704 561 703 Q545 700 532 690 L482 657 L475 647 L473 622 Z" fill="#303030" stroke="#1a1a1a" stroke-width="1.2"/>
<!-- inside (between top edge and middle rim) -->
<path d="M538 542 Q565 556 592 562 Q640 560 680 548 L680 600 L665 605 Q620 618 582 616 Q550 605 522 590 Z" fill="#2b2b2b"/>
<path d="M616 612 L670 556 L680 553 L680 600 L665 606 Z" fill="#1e1e1e"/>
<!-- top edge highlight -->
<path d="M538 543 Q565 557 592 563 Q640 561 680 549" stroke="#5e5e5e" stroke-width="1.3" fill="none"/>
<!-- teeth hatch on right edge -->
<g stroke="#4e4e4e" stroke-width="1">
 <path d="M668 556 L680 553 M668 562 L680 559 M668 568 L680 565 M668 574 L680 571 M668 580 L680 577 M668 586 L680 583 M668 592 L680 589 M668 598 L680 595"/>
</g>
<!-- middle rim -->
<path d="M521 590 Q550 606 582 616 Q630 618 680 600" stroke="#1a1a1a" stroke-width="3" fill="none"/>
<path d="M521 589 Q550 605 582 615 Q630 617 680 599" stroke="#5a5a5a" stroke-width="1.6" fill="none" stroke-dasharray="1.5 1"/>
<!-- lower line -->
<path d="M506 615 Q535 630 565 640 Q600 645 636 642" stroke="#171717" stroke-width="1.3" fill="none"/>
<!-- outer bottom edge highlight -->
<path d="M479 652 L533 689 Q548 699 562 701 Q580 700 597 687 L636 643" stroke="#3a3a3a" stroke-width="1" fill="none"/>
<!-- bucket cylinder & rod -->
<line x1="492" y1="298" x2="467" y2="440" stroke="#d8d800" stroke-width="14"/>
<line x1="489" y1="306" x2="466" y2="436" stroke="#3a3000" stroke-width="8"/>
<line x1="489" y1="306" x2="466" y2="436" stroke="#c8c800" stroke-width="3"/>
<path d="M485 297 L499 299.5 L497.5 307 L483.5 304.5 Z" fill="#e6e600"/>
<path d="M461 434 L475 436.5 L474 443 L460 440.5 Z" fill="#e6e600"/>
<circle cx="491" cy="302" r="2.2" fill="#222"/>
<circle cx="467" cy="439" r="2.2" fill="#222"/>
<!-- links -->
<line x1="450" y1="545" x2="485" y2="592" stroke="#dcdc00" stroke-width="19"/>
<line x1="459" y1="546" x2="490" y2="590" stroke="#f4f400" stroke-width="1.6"/>
<path d="M450 523 L501 503 L501 510 L453 530 Z" fill="#e2e200"/>
<path d="M453 532 L515 506 L518 514 L456 540 Z" fill="#e6e600"/>
<path d="M456 539 L517 514" stroke="#9a9a00" stroke-width="0.8"/>
<circle cx="450.5" cy="536" r="10.5" fill="#e4e400"/>
<path d="M441 540 Q441 527 452 526" stroke="#f6f600" stroke-width="2" fill="none"/>
<circle cx="449.5" cy="540.5" r="4.5" fill="#dcdce0"/>
<circle cx="516.6" cy="511" r="5" fill="#dcdce0"/>
<line x1="465" y1="442" x2="452.5" y2="524" stroke="#a0a0a0" stroke-width="6.5"/>
<line x1="464" y1="442" x2="451.5" y2="524" stroke="#c8c8c8" stroke-width="1.6"/>
<!-- black bracket -->
<path d="M506 553 Q520 552 523 566 L498 616 L488 645 Q482 652 476 648 L473 622 L482 594 L498 560 Z" fill="#242424" stroke="#151515" stroke-width="1"/>
<path d="M521 576 L497 622 L486 650" stroke="#141414" stroke-width="4" fill="none"/>
<circle cx="513.3" cy="567.5" r="8" fill="#d8d8de"/>
<circle cx="485" cy="607.5" r="8" fill="#d8d8de"/>
</svg>


<!-- triad -->
<svg class="abs" style="left:25px;top:890px" width="70" height="60" viewBox="0 0 70 60">
 <text x="18" y="14" font-size="7" fill="#2fdc2f" font-family="Liberation Sans">Y</text>
 <rect x="19.5" y="22" width="3.5" height="24" fill="#22cc22"/>
 <path d="M17 25 L21.2 17 L25.4 25 Z" fill="#22cc22"/>
 <rect x="22" y="45" width="18" height="3.5" fill="#dd1c1c"/>
 <path d="M38 42.5 L46 46.7 L38 51 Z" fill="#dd1c1c"/>
 <circle cx="55" cy="47" r="2" fill="#9c2b2b" opacity="0.6"/>
 <path d="M22 45 L10 54 L8.5 51.5 Z" fill="#1b1bcc" stroke="#1b1bcc" stroke-width="2.5"/>
</svg>
<div class="abs" style="left:22px;top:977px;font-size:13.5px;font-weight:bold;color:#1c1c1c">*Dimetric</div>

<div id="taskbar" class="abs"></div>
<div id="search" class="abs"></div>
<div id="stext" class="abs">Type here to search</div>
<svg class="abs" style="left:0;top:1040px" width="1920" height="40" viewBox="0 0 1920 40">
 <!-- windows logo -->
 <g fill="#fff">
  <path d="M16 13.2 L22.5 12.3 L22.5 19.2 L16 19.2 Z"/>
  <path d="M23.5 12.1 L32 11 L32 19.2 L23.5 19.2 Z"/>
  <path d="M16 20.2 L22.5 20.2 L22.5 27.1 L16 26.3 Z"/>
  <path d="M23.5 20.2 L32 20.2 L32 28.4 L23.5 27.3 Z"/>
 </g>
 <!-- search glass -->
 <g fill="none" stroke="#222" stroke-width="1.3">
  <circle cx="71.5" cy="17.5" r="5"/>
  <path d="M68 21 L61 28"/>
 </g>
 <!-- cortana -->
 <circle cx="416" cy="21" r="6.5" fill="none" stroke="#fff" stroke-width="2"/>
 <!-- task view -->
 <g fill="none" stroke="#fff" stroke-width="1.3">
  <rect x="456.5" y="16.5" width="9" height="9"/>
  <path d="M456 13.5 H466 M456 28.5 H466 M470 13 V17 M470 22 V29"/>
 </g>
 <rect x="469" y="18" width="2.5" height="3" fill="#fff"/>
 <!-- edge -->
 <path d="M506 22 Q506 11 516 11 Q526 11 526 22 L511 22 Q512 28 518 28 Q522 28 525 26 L525 31 Q521 32 517 32 Q505 31 505 22 Z M511 19 L521 19 Q520 15 516 15 Q512 15 511 19 Z" fill="#1e7ad8" fill-rule="evenodd"/>
 <!-- explorer -->
 <path d="M553 12 L560 12 L562 14 L574 14 L574 30 L553 30 Z" fill="#f5c842"/>
 <path d="M553 15 L574 15 L574 30 L553 30 Z" fill="#f9d568"/>
 <path d="M557 24 L570 24 L570 30 L566 30 L566 27 L561 27 L561 30 L557 30 Z" fill="#3d8fd6"/>
 <!-- chrome -->
 <circle cx="613" cy="21" r="11" fill="#db4437"/>
 <path d="M613 21 L603.5 15.5 A11 11 0 0 0 607.5 30.5 Z" fill="#0f9d58"/>
 <path d="M613 21 L607.5 30.5 A11 11 0 0 0 624 21 L613 21 Z" fill="#ffcd40"/>
 <circle cx="613" cy="21" r="5" fill="#fff"/>
 <circle cx="613" cy="21" r="3.8" fill="#4285f4"/>
 <!-- snipping -->
 <circle cx="662" cy="20" r="8" fill="none" stroke="#e0461c" stroke-width="3"/>
 <path d="M662 10 L662 26 L667 20" stroke="#ddd" stroke-width="2.2" fill="none"/>
 <circle cx="657" cy="29" r="3" fill="none" stroke="#1e88e5" stroke-width="2"/>
 <circle cx="664" cy="31" r="3" fill="none" stroke="#1e88e5" stroke-width="2"/>
 <!-- app hex -->
 <path d="M711 10 L721.5 16 L721.5 28 L711 34 L700.5 28 L700.5 16 Z" fill="#2b3550" stroke="#8891a6" stroke-width="1.3"/>
 <path d="M704 27 L718 17" stroke="#6a9de0" stroke-width="1.5"/>
 <!-- cmd -->
 <rect x="748" y="12.5" width="22" height="18" fill="#000" stroke="#999" stroke-width="1"/>
 <rect x="748" y="12.5" width="22" height="2" fill="#bbb"/>
 <text x="750" y="21" font-size="5" fill="#fff" font-family="Liberation Mono">C:\_</text>
 <!-- app blue -->
 <rect x="798" y="13" width="22" height="17" fill="#f4f4f4" stroke="#bbb"/>
 <rect x="803" y="15" width="9" height="13" fill="#1e7ad8"/>
 <!-- SW -->
 <path d="M848 14 L858 10 L868 14 L868 27 L858 31 L848 27 Z" fill="#c8141e"/>
 <text x="849" y="26" font-size="11" font-weight="bold" fill="#fff" font-family="Liberation Sans">S W</text>
 <text x="852" y="32" font-size="6.5" font-weight="bold" fill="#fff" font-family="Liberation Sans">2020</text>
 <!-- active underlines -->
 <rect x="691" y="38" width="40" height="2" fill="#76b9ed"/>
 <rect x="740" y="38" width="40" height="2" fill="#76b9ed"/>
 <rect x="789" y="38" width="40" height="2" fill="#76b9ed"/>
 <rect x="838" y="38" width="40" height="2" fill="#76b9ed"/>
 <!-- tray -->
 <path d="M1713 23 L1718 18 L1723 23" stroke="#fff" stroke-width="1.2" fill="none"/>
 <g fill="none" stroke="#fff" stroke-width="1.1">
  <rect x="1737.5" y="16.5" width="12" height="7"/>
  <path d="M1736 15 V19 M1734.5 17 H1737.5 M1750 18.5 V21.5"/>
  <path d="M1762 26 A10 10 0 0 1 1774 16 M1765 26 A7 7 0 0 1 1774 19 M1768 26 A4 4 0 0 1 1773 22"/>
  <path d="M1784 17 H1787 L1791 13.5 V26.5 L1787 23 H1784 Z M1794 17 Q1796 20 1794 23 M1796.5 15 Q1800 20 1796.5 25"/>
 </g>
 <circle cx="1772.5" cy="25" r="1.5" fill="#fff"/>
 <!-- notification -->
 <path d="M1879 13 H1895 V24 H1885 L1881 27 V24 H1879 Z" fill="#fff"/>
 <circle cx="1894" cy="28" r="7" fill="#202020" stroke="#888" stroke-width="1"/>
 <text x="1891" y="32" font-size="10" fill="#fff" font-family="Liberation Sans">1</text>
 <rect x="1915" y="0" width="1" height="40" fill="#555"/>
</svg>
<div class="abs" style="left:1800px;top:1043px;width:70px;text-align:center;font-size:12px;color:#fff;line-height:17px">12:18 PM<br>9/16/2020</div>
</body></html>
